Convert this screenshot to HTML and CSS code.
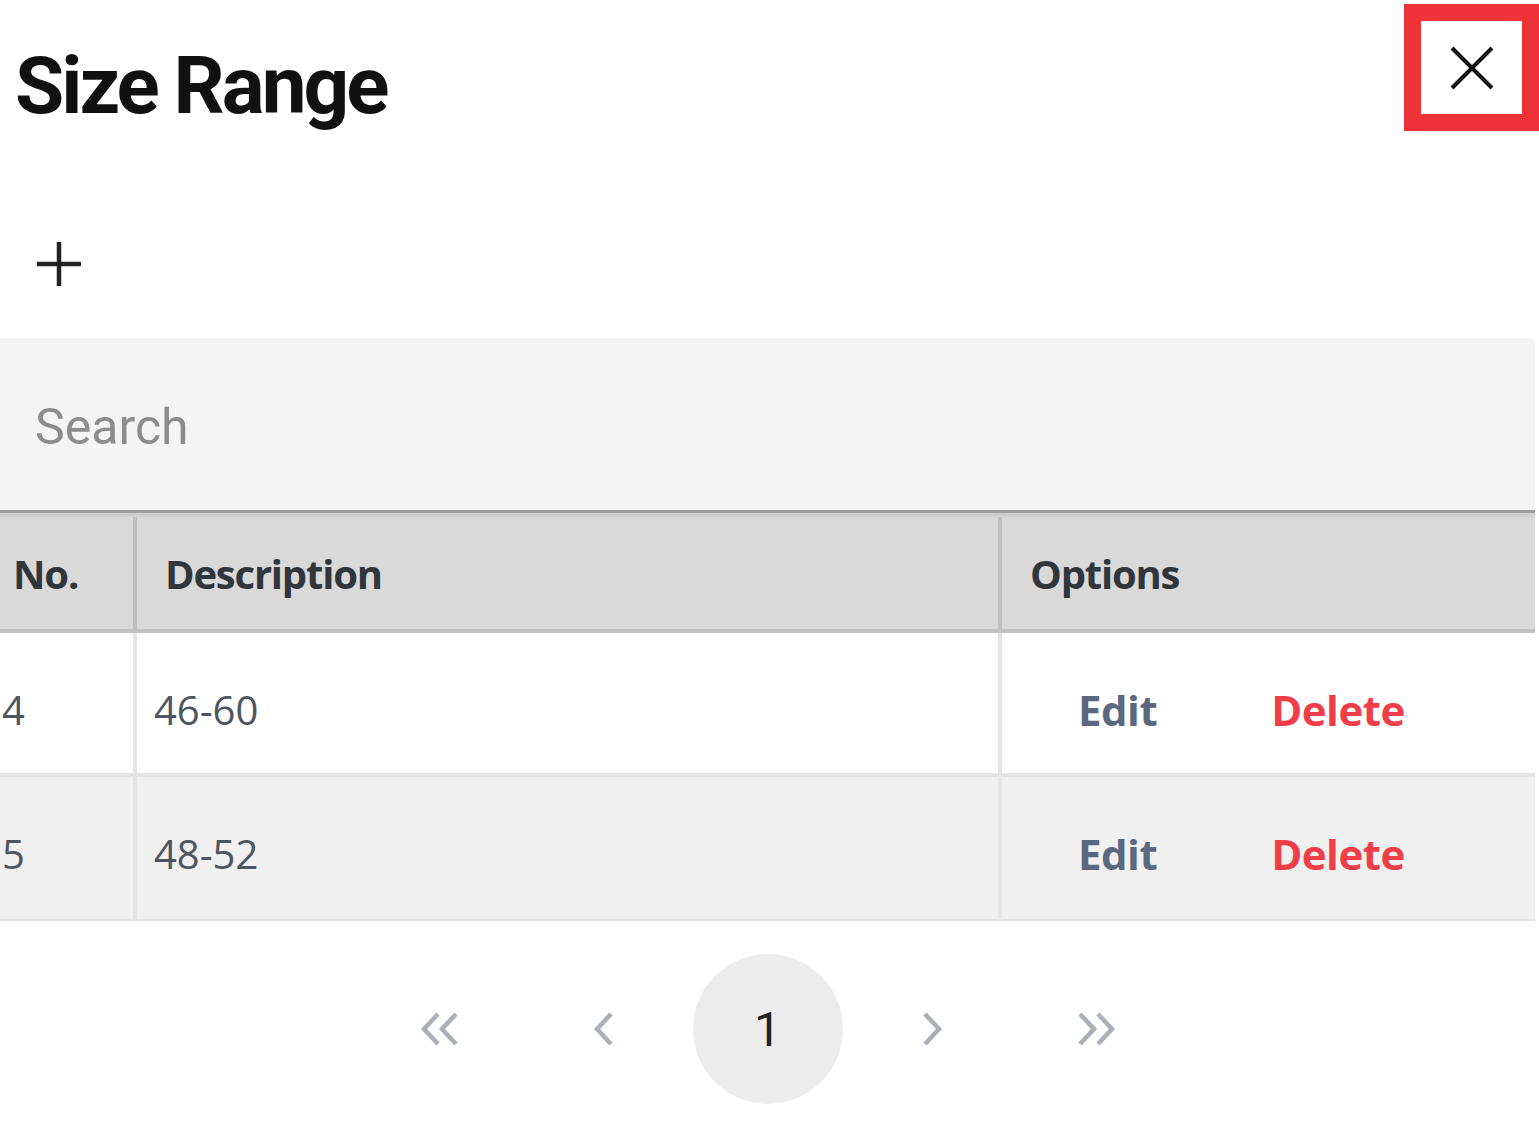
FILE: index.html
```html
<!DOCTYPE html>
<html lang="en">
<head>
  <meta charset="UTF-8">
  <title>Size Range</title>
  <meta name="viewport" content="width=device-width, initial-scale=1.0">
  <link rel="stylesheet" href="styles.css">
</head>
<body>
  <div class="dialog">
    <div class="dialog-head">
      <h1 class="title">Size Range</h1>
      <button class="btn-close" aria-label="Close">
        <svg width="44" height="44" viewBox="0 0 44 44">
          <path d="M2 2 L42 42 M42 2 L2 42" stroke="#111" stroke-width="4" fill="none"/>
        </svg>
      </button>
    </div>

    <div class="toolbar">
      <button class="btn-add" aria-label="Add">
        <svg width="44" height="44" viewBox="0 0 44 44">
          <path d="M22 0 V44 M0 22 H44" stroke="#222" stroke-width="4.5" fill="none"/>
        </svg>
      </button>
    </div>

    <div class="search">
      <input type="text" placeholder="Search">
    </div>

    <table class="grid">
      <thead>
        <tr>
          <th class="col-no">No.</th>
          <th class="col-desc">Description</th>
          <th class="col-opt">Options</th>
        </tr>
      </thead>
      <tbody>
        <tr>
          <td class="col-no">4</td>
          <td class="col-desc">46-60</td>
          <td class="col-opt"><a href="#" class="link-edit">Edit</a><a href="#" class="link-delete">Delete</a></td>
        </tr>
        <tr class="alt">
          <td class="col-no">5</td>
          <td class="col-desc">48-52</td>
          <td class="col-opt"><a href="#" class="link-edit">Edit</a><a href="#" class="link-delete">Delete</a></td>
        </tr>
      </tbody>
    </table>

    <div class="pager">
      <button class="page-btn" aria-label="First page">
        <svg width="40" height="34" viewBox="0 0 40 34"><path d="M18 2 L4 17 L18 32 M36 2 L22 17 L36 32" stroke="#aab0b6" stroke-width="4.5" fill="none"/></svg>
      </button>
      <button class="page-btn" aria-label="Previous page">
        <svg width="22" height="34" viewBox="0 0 22 34"><path d="M18 2 L4 17 L18 32" stroke="#aab0b6" stroke-width="4.5" fill="none"/></svg>
      </button>
      <button class="page-btn current">1</button>
      <button class="page-btn" aria-label="Next page">
        <svg width="22" height="34" viewBox="0 0 22 34"><path d="M4 2 L18 17 L4 32" stroke="#aab0b6" stroke-width="4.5" fill="none"/></svg>
      </button>
      <button class="page-btn" aria-label="Last page">
        <svg width="40" height="34" viewBox="0 0 40 34"><path d="M4 2 L18 17 L4 32 M22 2 L36 17 L22 32" stroke="#aab0b6" stroke-width="4.5" fill="none"/></svg>
      </button>
    </div>
  </div>
</body>
</html>
```

FILE: styles.css
```css
body { margin: 0; background: #fff; font-family: Roboto, Arial, sans-serif; color: #222; }

.dialog { width: 1535px; }

/* Head */
.dialog-head {
  display: flex;
  justify-content: space-between;
  align-items: flex-start;
}
.title {
  margin: 38px 0 0 15px;
  font-size: 80px;
  font-weight: 700;
  letter-spacing: -3px;
  color: #111;
  line-height: 1.2;
}
.btn-close {
  width: 135px;
  height: 127px;
  margin: 4px -4px 0 0;
  border: 17px solid #ee3338;
  background: #fff;
  display: flex;
  align-items: center;
  justify-content: center;
  padding: 0;
  cursor: pointer;
}

/* Toolbar */
.toolbar { padding: 108px 0 52px 37px; }
.btn-add {
  display: block;
  padding: 0;
  border: none;
  background: none;
  cursor: pointer;
}
.btn-add svg { display: block; }

/* Search */
.search {
  background: #f4f4f4;
  height: 172px;
  border-bottom: 3px solid #9d9d9d;
  display: flex;
  align-items: center;
}
.search input {
  width: 100%;
  border: none;
  background: transparent;
  font-family: Roboto, Arial, sans-serif;
  font-size: 50px;
  padding: 6px 0 0 35px;
  outline: none;
}
.search input::placeholder { color: #8c8c8c; }

/* Table */
.grid {
  width: 100%;
  border-collapse: separate;
  border-spacing: 0;
  font-family: "Open Sans", "Segoe UI", sans-serif;
  border-top: 4px solid #cfcfcf;
}
.grid th {
  background: #d9d9d9;
  height: 112px;
  text-align: left;
  font-size: 40px;
  font-weight: 700;
  letter-spacing: -1.2px;
  color: #30363c;
  padding: 0 0 0 28px;
  border-bottom: 4px solid #c2c2c2;
  border-right: 4px solid #bfbfbf;
}
.grid th.col-no { padding-left: 13px; width: 120px; }
.grid th.col-desc { width: 833px; }
.grid th:last-child { border-right: none; }
.grid td {
  height: 127px;
  font-size: 40px;
  color: #4d5560;
  padding: 13px 0 0 17px;
  border-right: 4px solid #e4e4e4;
  border-bottom: 4px solid #e4e4e4;
}
.grid td.col-no { padding-left: 2px; }
.grid td:last-child { border-right: none; padding-left: 76px; }
.grid tr.alt td { background: #f0f0f0; height: 131px; padding-top: 11px; border-bottom-width: 2px; }

.link-edit, .link-delete {
  font-size: 42px;
  font-weight: 700;
  letter-spacing: -0.5px;
  text-decoration: none;
}
.link-edit { color: #5a6880; margin-right: 114px; }
.link-delete { color: #ef3e4a; }

/* Pager */
.pager {
  display: flex;
  justify-content: center;
  gap: 14px;
  margin-top: 33px;
}
.page-btn {
  width: 150px;
  height: 150px;
  border: none;
  border-radius: 50%;
  background: none;
  display: flex;
  align-items: center;
  justify-content: center;
  padding: 0;
  cursor: pointer;
}
.page-btn.current {
  background: #ececec;
  font-family: Roboto, Arial, sans-serif;
  font-size: 48px;
  color: #222;
}
```
